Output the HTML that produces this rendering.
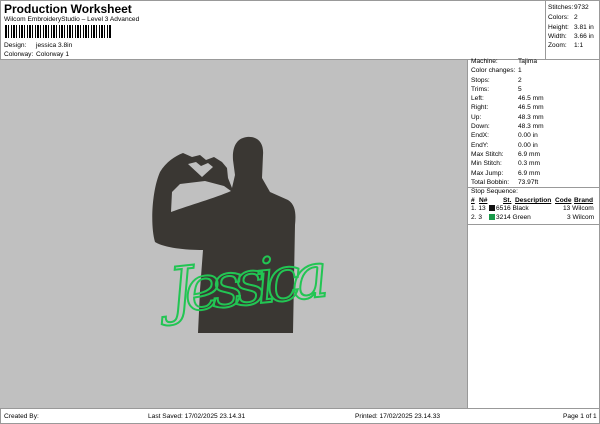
<!DOCTYPE html>
<html><head><style>
*{margin:0;padding:0;box-sizing:border-box}
body{width:600px;height:424px;background:#fff;font-family:"Liberation Sans",sans-serif;font-size:6.6px;color:#000;position:relative;overflow:hidden}
.a{position:absolute;white-space:nowrap;line-height:9px}
</style></head><body>
<div class="a" style="left:4px;top:2px;font-size:12px;font-weight:bold;line-height:14px">Production Worksheet</div>
<div class="a" style="left:4px;top:15px">Wilcom EmbroideryStudio – Level 3 Advanced</div>
<div style="position:absolute;left:5px;top:25px;width:106px;height:13px;background:repeating-linear-gradient(90deg,#000 0 2px,#fff 2px 3px,#000 3px 4px,#fff 4px 6px,#000 6px 7px,#fff 7px 8px)"></div>
<div class="a" style="left:4px;top:41px">Design:</div><div class="a" style="left:36px;top:41px">jessica 3.8in</div>
<div class="a" style="left:4px;top:50px">Colorway:</div><div class="a" style="left:36px;top:50px">Colorway 1</div>
<div style="position:absolute;left:0;top:0;width:600px;height:424px;border:1px solid #999;pointer-events:none"></div>
<div style="position:absolute;left:545px;top:0;width:1px;height:59px;background:#999"></div>
<div style="position:absolute;left:0;top:59px;width:600px;height:1px;background:#999"></div>
<div class="a" style="left:548px;top:3px">Stitches:</div><div class="a" style="left:574px;top:3px">9732</div>
<div class="a" style="left:548px;top:13px">Colors:</div><div class="a" style="left:574px;top:13px">2</div>
<div class="a" style="left:548px;top:23px">Height:</div><div class="a" style="left:574px;top:23px">3.81 in</div>
<div class="a" style="left:548px;top:32px">Width:</div><div class="a" style="left:574px;top:32px">3.66 in</div>
<div class="a" style="left:548px;top:41px">Zoom:</div><div class="a" style="left:574px;top:41px">1:1</div>
<div style="position:absolute;left:0;top:60px;width:467px;height:348px;background:#c0c0c0"></div>
<div style="position:absolute;left:467px;top:60px;width:1px;height:348px;background:#999"></div>
<svg style="position:absolute;left:0;top:60px" width="467" height="348" viewBox="0 60 467 348">
<path fill="#3a3733" d="M247,137 C258,136 264,143 263,155 L262,178 L270,192 L288,200 C296,205 296,215 295,225 L293,333 L198,333 L200,290 L203,250 C185,250 165,248 155,242 C150,225 152,190 160,172 C166,162 175,156 183,153 L192,157 L200,155 L206,160 L214,157 L222,162 L227,168 L228,178 L232,188 L235,175 L233,160 C232,145 238,138 247,137 Z"/>
<path fill="#c0c0c0" d="M188,164 L196,162 L201,166 L208,163 L213,167 L202,177 Z"/>
<path fill="#c0c0c0" d="M171,212 L172,192 L180,184 L205,181 L224,186 L231,191 C215,198 190,205 171,212 Z"/>
<text x="168" y="305" font-family="DejaVu Serif,serif" font-style="italic" font-size="62" fill="none" stroke="#22c553" stroke-width="2" transform="rotate(-6 240 280)" textLength="160">Jessica</text>
</svg>
<div class="a" style="left:471px;top:57px">Machine:</div><div class="a" style="left:518px;top:57px">Tajima</div>
<div class="a" style="left:471px;top:66px">Color changes:</div><div class="a" style="left:518px;top:66px">1</div>
<div class="a" style="left:471px;top:76px">Stops:</div><div class="a" style="left:518px;top:76px">2</div>
<div class="a" style="left:471px;top:85px">Trims:</div><div class="a" style="left:518px;top:85px">5</div>
<div class="a" style="left:471px;top:94px">Left:</div><div class="a" style="left:518px;top:94px">46.5 mm</div>
<div class="a" style="left:471px;top:103px">Right:</div><div class="a" style="left:518px;top:103px">46.5 mm</div>
<div class="a" style="left:471px;top:113px">Up:</div><div class="a" style="left:518px;top:113px">48.3 mm</div>
<div class="a" style="left:471px;top:122px">Down:</div><div class="a" style="left:518px;top:122px">48.3 mm</div>
<div class="a" style="left:471px;top:131px">EndX:</div><div class="a" style="left:518px;top:131px">0.00 in</div>
<div class="a" style="left:471px;top:141px">EndY:</div><div class="a" style="left:518px;top:141px">0.00 in</div>
<div class="a" style="left:471px;top:150px">Max Stitch:</div><div class="a" style="left:518px;top:150px">6.9 mm</div>
<div class="a" style="left:471px;top:159px">Min Stitch:</div><div class="a" style="left:518px;top:159px">0.3 mm</div>
<div class="a" style="left:471px;top:169px">Max Jump:</div><div class="a" style="left:518px;top:169px">6.9 mm</div>
<div class="a" style="left:471px;top:178px">Total Bobbin:</div><div class="a" style="left:518px;top:178px">73.97ft</div>
<div style="position:absolute;left:468px;top:187px;width:132px;height:1px;background:#999"></div>
<div class="a" style="left:471px;top:187px">Stop Sequence:</div>
<div class="a" style="left:471px;top:196px;font-weight:bold;text-decoration:underline">#</div>
<div class="a" style="left:479px;top:196px;font-weight:bold;text-decoration:underline">N#</div>
<div class="a" style="left:503px;top:196px;font-weight:bold;text-decoration:underline">St.</div>
<div class="a" style="left:515px;top:196px;font-weight:bold;text-decoration:underline">Description</div>
<div class="a" style="left:555px;top:196px;font-weight:bold;text-decoration:underline">Code</div>
<div class="a" style="left:574px;top:196px;font-weight:bold;text-decoration:underline">Brand</div>
<div class="a" style="left:471px;top:204px">1. 13</div>
<div style="position:absolute;left:489px;top:205px;width:6px;height:6px;background:#111"></div>
<div class="a" style="left:496px;top:204px">6516 Black</div><div class="a" style="left:563px;top:204px">13 Wilcom</div>
<div class="a" style="left:471px;top:213px">2. 3</div>
<div style="position:absolute;left:489px;top:214px;width:6px;height:6px;background:#1a9a4a"></div>
<div class="a" style="left:496px;top:213px">3214 Green</div><div class="a" style="left:567px;top:213px">3 Wilcom</div>
<div style="position:absolute;left:468px;top:224px;width:132px;height:1px;background:#999"></div>
<div style="position:absolute;left:0;top:408px;width:600px;height:1px;background:#999"></div>
<div class="a" style="left:4px;top:412px">Created By:</div>
<div class="a" style="left:148px;top:412px">Last Saved: 17/02/2025 23.14.31</div>
<div class="a" style="left:355px;top:412px">Printed: 17/02/2025 23.14.33</div>
<div class="a" style="left:563px;top:412px">Page 1 of 1</div>
</body></html>
